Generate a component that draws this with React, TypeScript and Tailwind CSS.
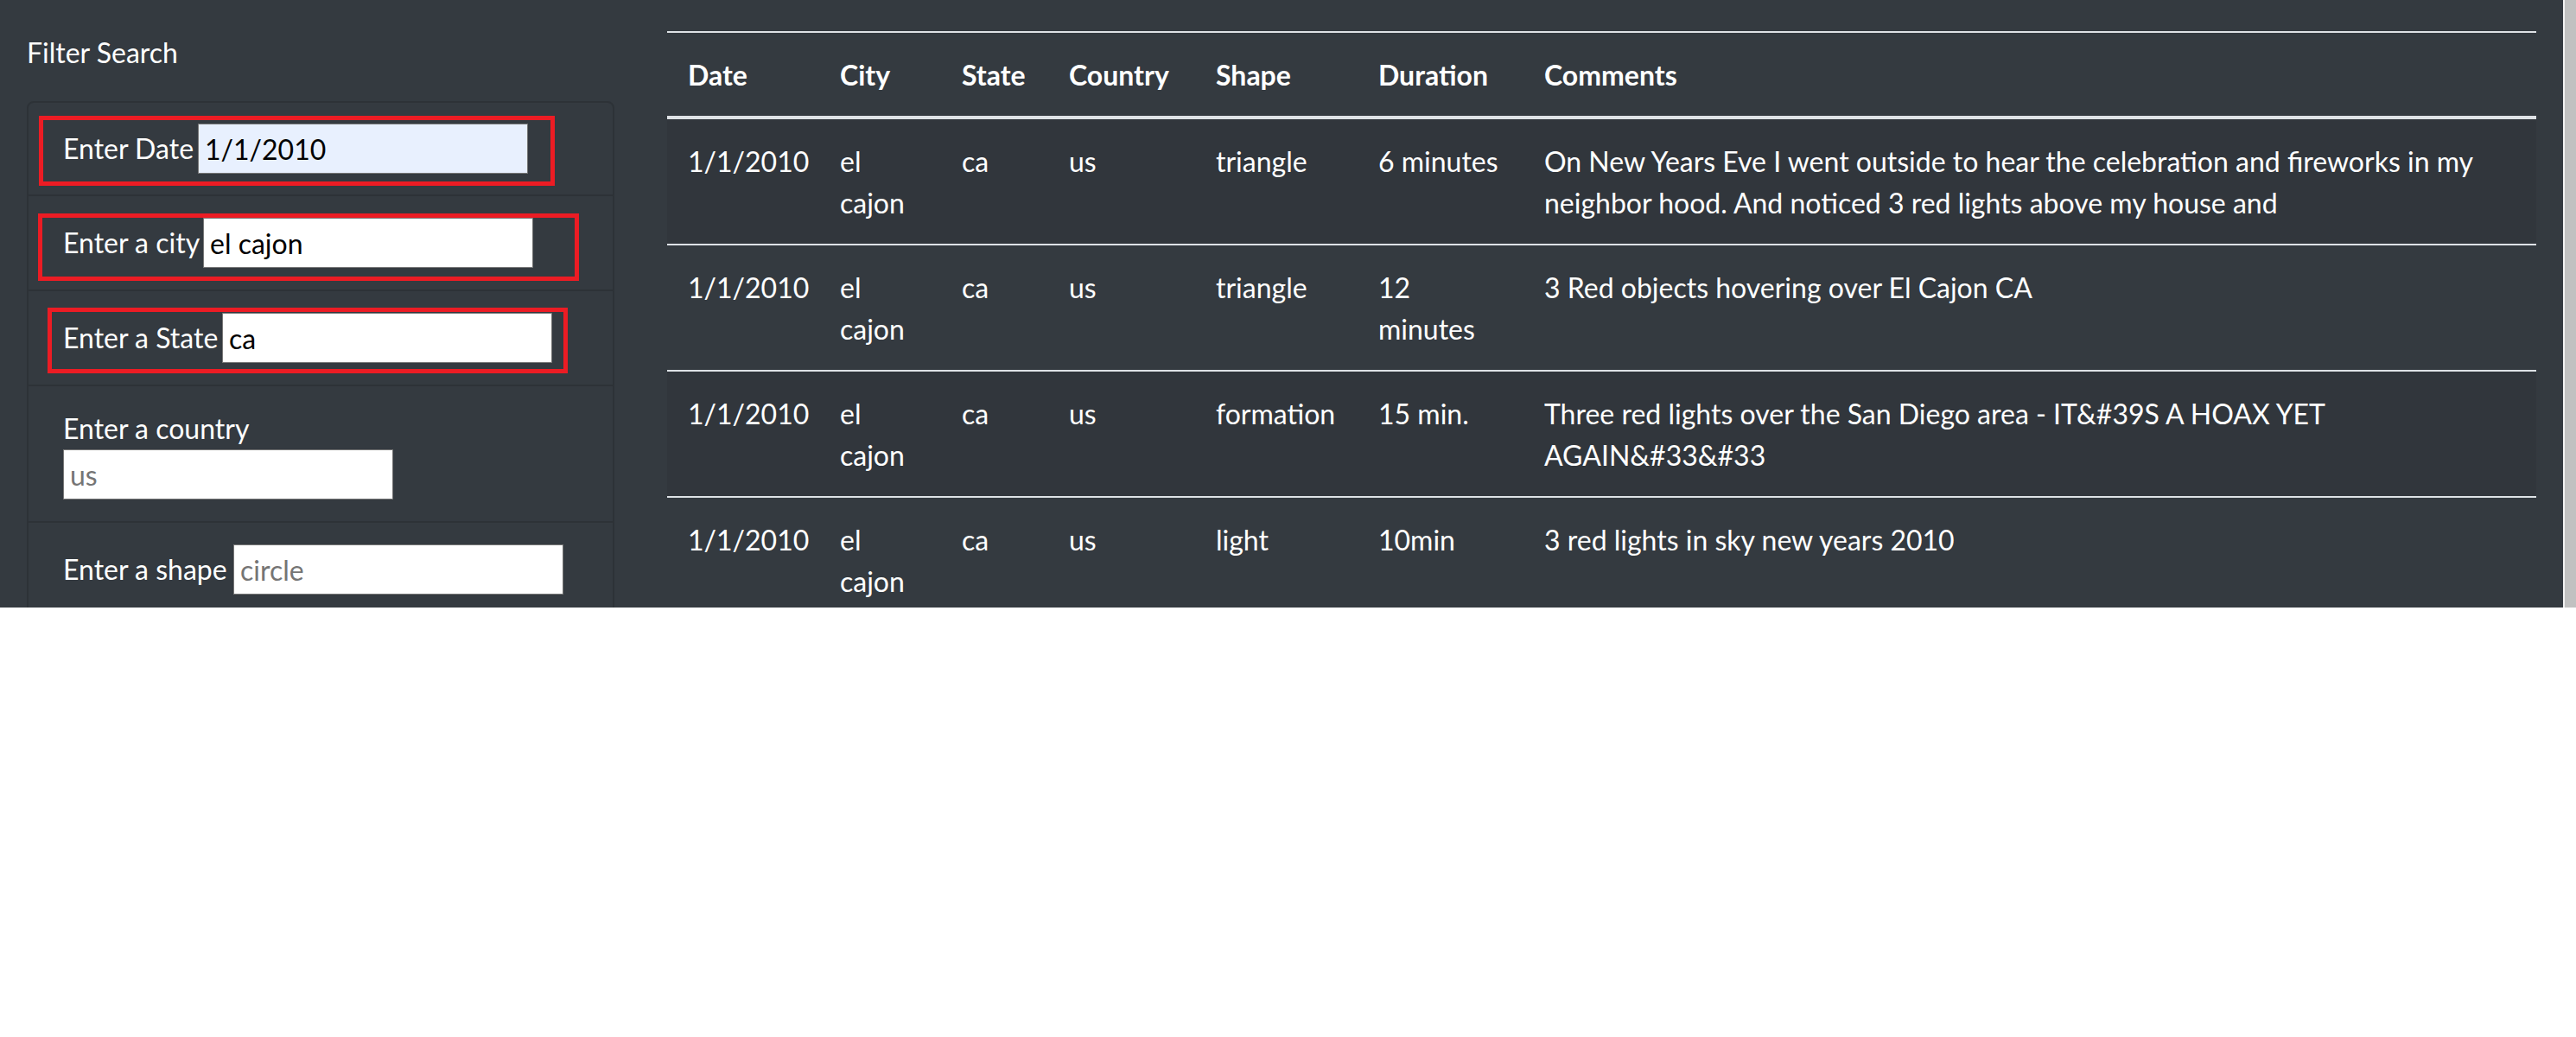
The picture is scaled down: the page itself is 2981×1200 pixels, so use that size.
import React from "react";

const font = { fontFamily: "Lato, 'Open Sans', sans-serif" };

const rows = [
  {
    date: "1/1/2010",
    city: "el cajon",
    state: "ca",
    country: "us",
    shape: "triangle",
    duration: "6 minutes",
    comments:
      "On New Years Eve I went outside to hear the celebration and fireworks in my neighbor hood. And noticed 3 red lights above my house and",
  },
  {
    date: "1/1/2010",
    city: "el cajon",
    state: "ca",
    country: "us",
    shape: "triangle",
    duration: "12 minutes",
    comments: "3 Red objects hovering over El Cajon CA",
  },
  {
    date: "1/1/2010",
    city: "el cajon",
    state: "ca",
    country: "us",
    shape: "formation",
    duration: "15 min.",
    comments: "Three red lights over the San Diego area - IT&#39S A HOAX YET AGAIN&#33&#33",
  },
  {
    date: "1/1/2010",
    city: "el cajon",
    state: "ca",
    country: "us",
    shape: "light",
    duration: "10min",
    comments: "3 red lights in sky new years 2010",
  },
];

const inputCls =
  "h-[58px] w-[382px] border border-[#767676] pl-[7px] text-[32px] text-black outline-none placeholder:text-[#757575]";

function RedBox({ className }: { className: string }) {
  return <div className={`pointer-events-none absolute border-[5px] border-[#ec1c24] ${className}`} />;
}

function Sidebar() {
  return (
    <div className="w-[741px] shrink-0 pl-[31px] pr-[30px] pt-[37px]">
      <p className="text-[32px] leading-[48px] text-white">Filter Search</p>
      <ul className="mt-[32px] rounded-[8px] border-2 border-[#2d3237] text-[32px] leading-[48px] text-white">
        <li className="relative flex h-[108px] items-center border-b-2 border-[#2d3237] pl-[40px]">
          <RedBox className="left-[12px] top-[15px] h-[81px] w-[597px]" />
          <label className="w-[156px]">Enter Date</label>
          <input className={`${inputCls} bg-[#e8f0fe]`} defaultValue="1/1/2010" />
        </li>
        <li className="relative flex h-[110px] items-center border-b-2 border-[#2d3237] pl-[40px]">
          <RedBox className="left-[11px] top-[20px] h-[78px] w-[626px]" />
          <label className="w-[162px]">Enter a city</label>
          <input className={`${inputCls} bg-white`} defaultValue="el cajon" />
        </li>
        <li className="relative flex h-[110px] items-center border-b-2 border-[#2d3237] pl-[40px]">
          <RedBox className="left-[22px] top-[19px] h-[76px] w-[602px]" />
          <label className="w-[184px]">Enter a State</label>
          <input className={`${inputCls} bg-white`} defaultValue="ca" />
        </li>
        <li className="flex h-[158px] flex-col items-start border-b-2 border-[#2d3237] pl-[40px] pt-[25px]">
          <label>Enter a country</label>
          <input className={`${inputCls} bg-white`} placeholder="us" />
        </li>
        <li className="flex h-[110px] items-center border-b-2 border-[#2d3237] pl-[40px]">
          <label className="w-[197px]">Enter a shape</label>
          <input className={`${inputCls} bg-white`} placeholder="circle" />
        </li>
      </ul>
    </div>
  );
}

function DataTable() {
  const heads = ["Date", "City", "State", "Country", "Shape", "Duration", "Comments"];
  return (
    <div className="flex-1 pl-[31px] pr-[31px] pt-[36px]">
      <table className="w-full table-fixed border-separate border-spacing-0 text-left text-[32px] leading-[48px] text-white">
        <colgroup>
          <col className="w-[176px]" />
          <col className="w-[141px]" />
          <col className="w-[124px]" />
          <col className="w-[170px]" />
          <col className="w-[188px]" />
          <col className="w-[192px]" />
          <col />
        </colgroup>
        <thead>
          <tr>
            {heads.map((h) => (
              <th
                key={h}
                className="border-b-4 border-t-2 border-[#dee2e6] px-[24px] pb-[23px] pt-[25px] align-top font-bold"
              >
                {h}
              </th>
            ))}
          </tr>
        </thead>
        <tbody>
          {rows.map((r, i) => {
            const cell = `px-[24px] pb-[23px] pt-[25px] align-top ${i > 0 ? "border-t-2 border-[#dee2e6]" : ""}`;
            return (
              <tr key={i} className={i % 2 === 0 ? "bg-[#31363c]" : ""}>
                <td className={cell}>{r.date}</td>
                <td className={cell}>{r.city}</td>
                <td className={cell}>{r.state}</td>
                <td className={cell}>{r.country}</td>
                <td className={cell}>{r.shape}</td>
                <td className={cell}>{r.duration}</td>
                <td className={cell}>{r.comments}</td>
              </tr>
            );
          })}
        </tbody>
      </table>
    </div>
  );
}

export default function App() {
  return (
    <div className="flex w-[2981px] bg-white" style={font}>
      <div className="flex h-[703px] w-[2966px] overflow-hidden bg-[#343a40]">
        <Sidebar />
        <DataTable />
      </div>
      <div className="h-[703px] w-[15px] bg-[#f1f1f1] pl-[2px]">
        <div className="h-full w-[13px] bg-[#c1c1c1]" />
      </div>
    </div>
  );
}
